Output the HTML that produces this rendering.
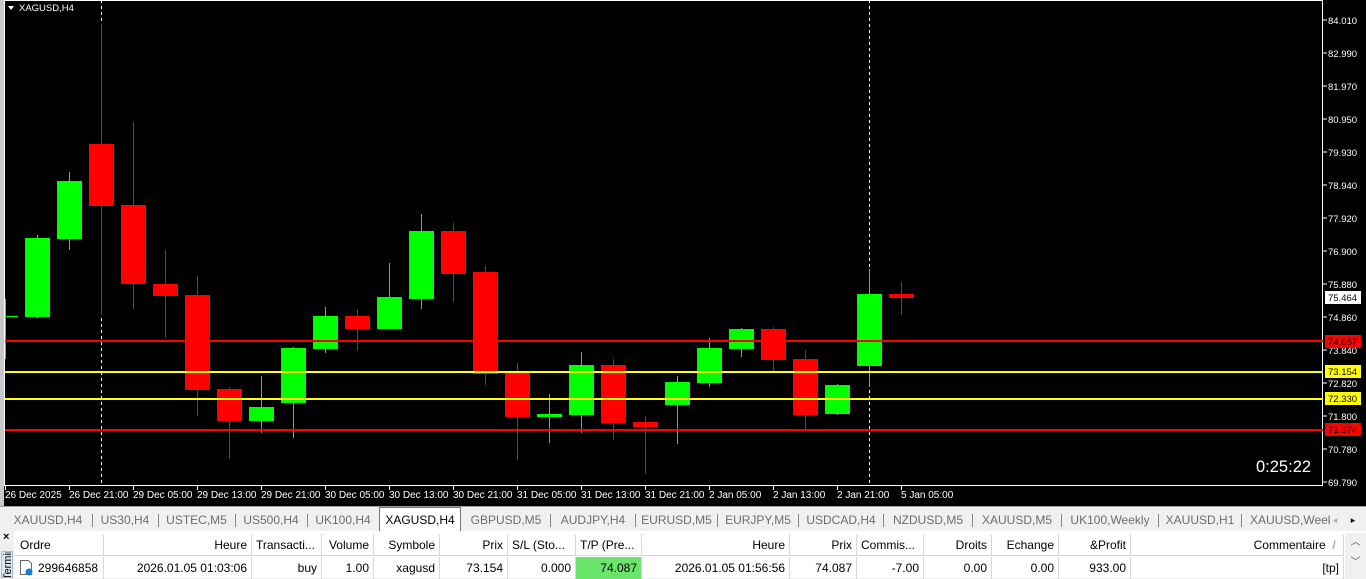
<!DOCTYPE html>
<html><head><meta charset="utf-8"><style>
*{margin:0;padding:0;box-sizing:border-box}
body{width:1366px;height:578px;overflow:hidden;background:#f0f0f0;font-family:"Liberation Sans",Tahoma,sans-serif;font-size:12px;color:#000;position:relative}
#chart{position:absolute;left:0;top:0;width:1366px;height:506px;background:#000}
#tabs{position:absolute;left:0;top:506px;width:1366px;height:25px;background:#f0f0f0;border-top:1px solid #a0a0a0}
.tab{position:absolute;top:3px;height:20px;line-height:20px;color:#6d6d6d;font-size:12px;text-align:center}
.sep{position:absolute;top:7px;width:1px;height:13px;background:#888}
#term{position:absolute;left:0;top:531px;width:1366px;height:47px;background:#fff}
.c{position:absolute;height:22px;line-height:22px;font-size:12px;padding:0 4px;white-space:nowrap;overflow:hidden;border-right:1px solid #d8d8d8}
.h{top:3px;border-bottom:1px solid #d8d8d8}
.r{top:26px}
.rt{text-align:right}
</style></head><body>
<div id="chart">
<svg width="1366" height="506" xmlns="http://www.w3.org/2000/svg" font-family="Liberation Sans, Tahoma, sans-serif">
<rect x="0" y="0" width="4" height="506" fill="#c8c8c8"/>
<rect x="4.5" y="0.5" width="1318" height="485" fill="none" stroke="#fff" stroke-width="1"/>
<path d="M8 6 l6 0 l-3 4 z" fill="#fff"/>
<text x="19" y="11" fill="#fff" font-size="9.5">XAGUSD,H4</text>
<line x1="101.5" y1="0" x2="101.5" y2="486" stroke="#fff" stroke-dasharray="3,3"/>
<line x1="869.5" y1="0" x2="869.5" y2="486" stroke="#fff" stroke-dasharray="3,3"/>
<g id="c"></g>
<rect x="5" y="340" width="1318" height="2" fill="#f00"/>
<rect x="5" y="371" width="1318" height="2" fill="#ff0"/>
<rect x="5" y="398" width="1318" height="2" fill="#ff0"/>
<rect x="5" y="429" width="1318" height="2" fill="#f00"/>
<g font-size="9.5" fill="#fff">
<g stroke="#fff"><line x1="1323" y1="20" x2="1327" y2="20"/><line x1="1323" y1="53" x2="1327" y2="53"/><line x1="1323" y1="86" x2="1327" y2="86"/><line x1="1323" y1="119" x2="1327" y2="119"/><line x1="1323" y1="152" x2="1327" y2="152"/><line x1="1323" y1="185" x2="1327" y2="185"/><line x1="1323" y1="218" x2="1327" y2="218"/><line x1="1323" y1="251" x2="1327" y2="251"/><line x1="1323" y1="284" x2="1327" y2="284"/><line x1="1323" y1="317" x2="1327" y2="317"/><line x1="1323" y1="350" x2="1327" y2="350"/><line x1="1323" y1="383" x2="1327" y2="383"/><line x1="1323" y1="416" x2="1327" y2="416"/><line x1="1323" y1="449" x2="1327" y2="449"/><line x1="1323" y1="482" x2="1327" y2="482"/></g>
<text x="1328" y="24">84.010</text><text x="1328" y="57">82.990</text><text x="1328" y="90">81.970</text><text x="1328" y="123">80.950</text><text x="1328" y="156">79.930</text><text x="1328" y="189">78.940</text><text x="1328" y="222">77.920</text><text x="1328" y="255">76.900</text><text x="1328" y="288">75.880</text><text x="1328" y="321">74.860</text><text x="1328" y="354">73.840</text><text x="1328" y="387">72.820</text><text x="1328" y="420">71.800</text><text x="1328" y="453">70.780</text><text x="1328" y="486">69.790</text>
</g>
<rect x="1325" y="291" width="36" height="13" fill="#fff"/><text x="1328" y="301" font-size="9.5" fill="#000">75.464</text>
<rect x="1325" y="335" width="36" height="13" fill="#f00"/><text x="1328" y="345" font-size="9.5" fill="#000">74.087</text>
<rect x="1325" y="365" width="36" height="13" fill="#ff0"/><text x="1328" y="375" font-size="9.5" fill="#000">73.154</text>
<rect x="1325" y="392" width="36" height="13" fill="#ff0"/><text x="1328" y="402" font-size="9.5" fill="#000">72.330</text>
<rect x="1325" y="423" width="36" height="13" fill="#f00"/><text x="1328" y="433" font-size="9.5" fill="#000">71.374</text>
<text x="1256" y="472" font-size="16.5" fill="#fff">0:25:22</text>
<g id="t" font-size="10" fill="#fff"></g>
</svg>
</div>
<div id="tabs">
<div class="tab" style="left:5px;width:86px">XAUUSD,H4</div><div class="sep" style="left:92px"></div>
<div class="tab" style="left:93px;width:64px">US30,H4</div><div class="sep" style="left:158px"></div>
<div class="tab" style="left:159px;width:75px">USTEC,M5</div><div class="sep" style="left:235px"></div>
<div class="tab" style="left:236px;width:70px">US500,H4</div><div class="sep" style="left:307px"></div>
<div class="tab" style="left:308px;width:70px">UK100,H4</div>
<div class="tab" style="left:379px;top:0;height:24px;line-height:24px;width:82px;background:#fff;color:#000;border:1px solid #777;border-bottom:none">XAGUSD,H4</div>
<div class="tab" style="left:462px;width:88px">GBPUSD,M5</div><div class="sep" style="left:550px"></div>
<div class="tab" style="left:551px;width:84px">AUDJPY,H4</div><div class="sep" style="left:635px"></div>
<div class="tab" style="left:636px;width:81px">EURUSD,M5</div><div class="sep" style="left:717px"></div>
<div class="tab" style="left:718px;width:80px">EURJPY,M5</div><div class="sep" style="left:798px"></div>
<div class="tab" style="left:799px;width:84px">USDCAD,H4</div><div class="sep" style="left:883px"></div>
<div class="tab" style="left:884px;width:88px">NZDUSD,M5</div><div class="sep" style="left:972px"></div>
<div class="tab" style="left:973px;width:88px">XAUUSD,M5</div><div class="sep" style="left:1061px"></div>
<div class="tab" style="left:1062px;width:96px">UK100,Weekly</div><div class="sep" style="left:1158px"></div>
<div class="tab" style="left:1159px;width:82px">XAUUSD,H1</div><div class="sep" style="left:1241px"></div>
<div class="tab" style="left:1250px;width:80px;text-align:left;overflow:hidden;white-space:nowrap">XAUUSD,Week</div>
<div class="tab" style="left:1330px;width:10px;color:#aaa;font-size:9px">◂</div>
<div class="tab" style="left:1348px;width:10px;color:#000;font-size:9px">▸</div>
</div>
<div id="term">
<div style="position:absolute;left:0;top:0;width:14px;height:47px;background:#f0f0f0"></div>
<div style="position:absolute;left:3px;top:0;font-size:11px;font-weight:bold">×</div>
<div style="position:absolute;left:1px;top:20px;width:12px;height:27px;background:#dbe6f3;border:1px solid #a8bcd6;overflow:hidden"><div style="transform:rotate(-90deg);transform-origin:0 0;position:absolute;left:0;top:28px;font-size:11px;white-space:nowrap">Terminal</div></div>
<div class="c h" style="left:16px;width:88px">Ordre</div>
<div class="c h rt" style="left:104px;width:148px">Heure</div>
<div class="c h" style="left:252px;width:70px">Transacti...</div>
<div class="c h rt" style="left:322px;width:52px">Volume</div>
<div class="c h rt" style="left:374px;width:66px">Symbole</div>
<div class="c h rt" style="left:440px;width:68px">Prix</div>
<div class="c h" style="left:508px;width:68px">S/L (Sto...</div>
<div class="c h" style="left:576px;width:66px">T/P (Pre...</div>
<div class="c h rt" style="left:642px;width:148px">Heure</div>
<div class="c h rt" style="left:790px;width:67px">Prix</div>
<div class="c h" style="left:857px;width:67px">Commis...</div>
<div class="c h rt" style="left:924px;width:68px">Droits</div>
<div class="c h rt" style="left:992px;width:67px">Echange</div>
<div class="c h rt" style="left:1059px;width:72px">&amp;Profit</div>
<div class="c h rt" style="left:1131px;width:213px">Commentaire &nbsp;<span style="color:#888">/</span>&nbsp;</div>
<div class="c r" style="left:16px;width:88px;padding-left:22px">299646858</div>
<svg style="position:absolute;left:19px;top:29px" width="15" height="16"><path d="M1.5 .5h8l3 3v11h-11z" fill="#fff" stroke="#666"/><circle cx="10" cy="12" r="3.5" fill="#1a7fd6"/></svg>
<div class="c r rt" style="left:104px;width:148px">2026.01.05 01:03:06</div>
<div class="c r rt" style="left:252px;width:70px">buy</div>
<div class="c r rt" style="left:322px;width:52px">1.00</div>
<div class="c r rt" style="left:374px;width:66px">xagusd</div>
<div class="c r rt" style="left:440px;width:68px">73.154</div>
<div class="c r rt" style="left:508px;width:68px">0.000</div>
<div class="c r rt" style="left:576px;width:66px;background:#6ae46a">74.087</div>
<div class="c r rt" style="left:642px;width:148px">2026.01.05 01:56:56</div>
<div class="c r rt" style="left:790px;width:67px">74.087</div>
<div class="c r rt" style="left:857px;width:67px">-7.00</div>
<div class="c r rt" style="left:924px;width:68px">0.00</div>
<div class="c r rt" style="left:992px;width:67px">0.00</div>
<div class="c r rt" style="left:1059px;width:72px">933.00</div>
<div class="c r rt" style="left:1131px;width:213px">[tp]</div>
<div style="position:absolute;left:1345px;top:2px;width:21px;height:45px;background:#f0f0f0;text-align:center;font-size:10px;color:#555;line-height:20px">︿<br>﹀</div>
</div>
<script>
var d=[[37,1,238,317,235,318],[69,1,181,239,172,250],[101,0,144,206,24,315],[133,0,205,284,122,309],[165,0,284,296,250,338],[197,0,295,390,276,416],[229,0,389,421,387,459],[261,1,407,421,376,433],[293,1,348,403,347,438],[325,1,316,349,307,353],[357,0,316,329,309,351],[389,1,297,329,263,329],[421,1,231,299,214,309],[453,0,231,274,223,302],[485,0,272,374,266,385],[517,0,373,417,363,460],[549,1,414,417,394,443],[581,1,365,415,352,433],[613,0,365,423,359,440],[645,0,422,427,416,474],[677,1,382,405,376,444],[709,1,348,383,338,387],[741,1,329,349,328,357],[773,0,329,360,327,373],[805,0,359,415,350,430],[837,1,385,414,384,415],[869,1,294,366,269,387],[901,0,294,298,282,315]];
var s='<rect x="5" y="299" width="1" height="60" fill="#0f0"/><rect x="5" y="316" width="13" height="1" fill="#0f0"/>';
d.forEach(function(a){var c=a[1]?'#0f0':'#f00';s+='<rect x="'+a[0]+'" y="'+a[4]+'" width="1" height="'+(a[5]-a[4])+'" fill="'+c+'"/><rect x="'+(a[0]-12)+'" y="'+a[2]+'" width="25" height="'+Math.max(2,a[3]-a[2])+'" fill="'+c+'"/>';});
document.getElementById('c').innerHTML=s;
var L=['26 Dec 2025','26 Dec 21:00','29 Dec 05:00','29 Dec 13:00','29 Dec 21:00','30 Dec 05:00','30 Dec 13:00','30 Dec 21:00','31 Dec 05:00','31 Dec 13:00','31 Dec 21:00','2 Jan 05:00','2 Jan 13:00','2 Jan 21:00','5 Jan 05:00'];
var t='';L.forEach(function(l,i){var x=5+64*i;t+='<rect x="'+x+'" y="486" width="1" height="4" fill="#fff"/><text x="'+x+'" y="498">'+l+'</text>';});
document.getElementById('t').innerHTML=t;
</script>
</body></html>
